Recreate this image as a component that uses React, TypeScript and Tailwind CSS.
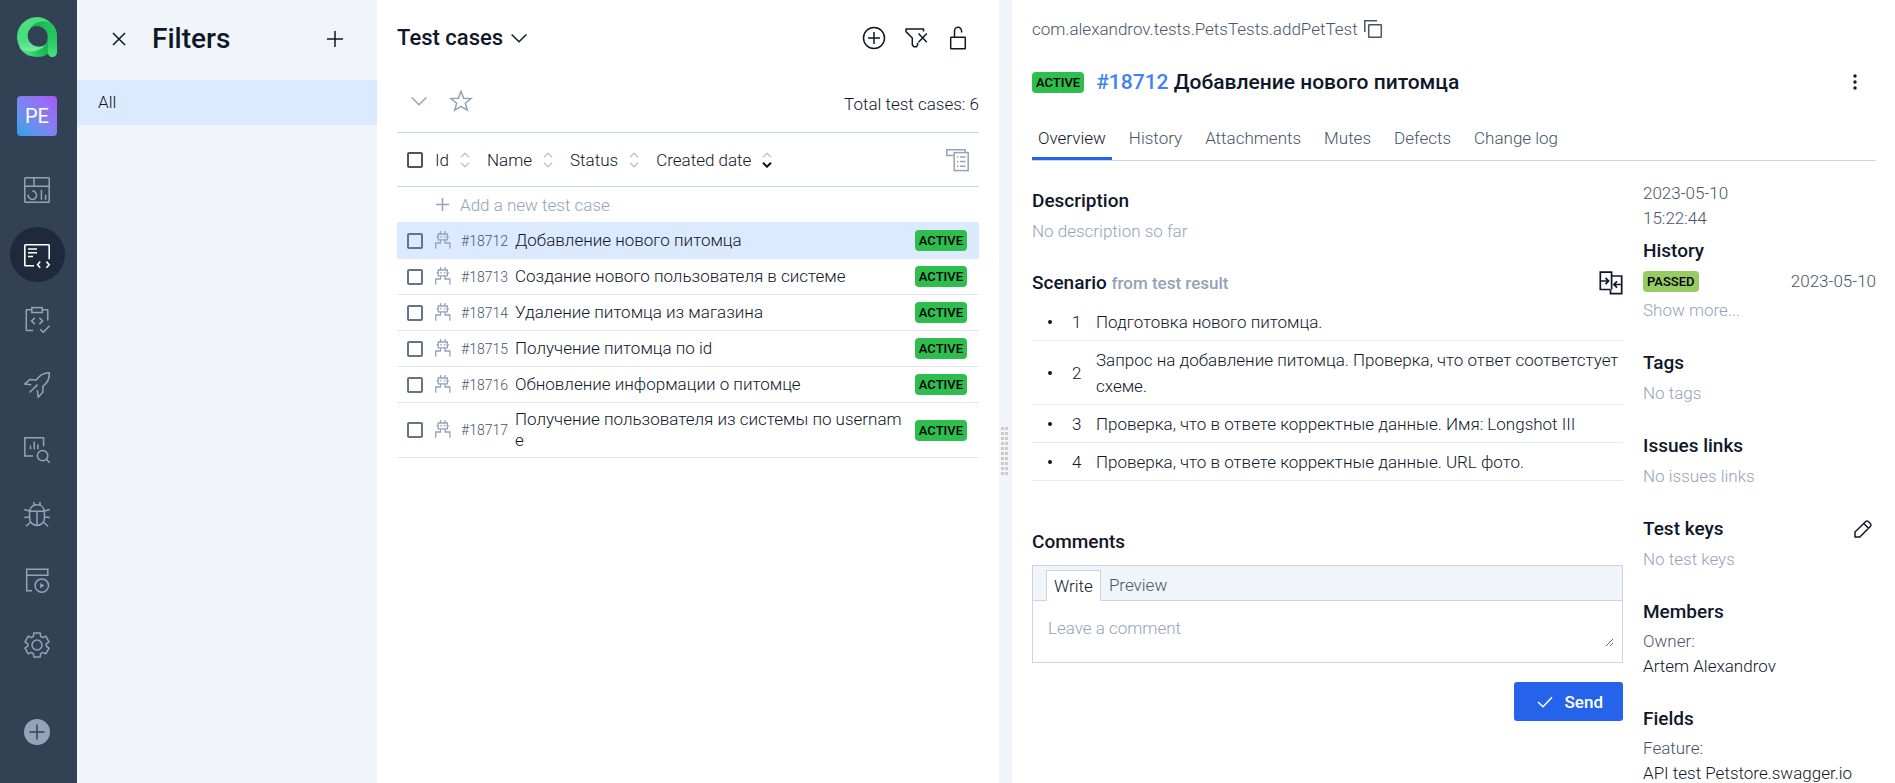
import React, { useState } from "react";

type IconProps = { size: number; className?: string; stroke?: number; children: React.ReactNode };

function Icon({ size, className = "", stroke = 1.5, children }: IconProps) {
  return (
    <svg
      width={size}
      height={size}
      viewBox={`0 0 ${size} ${size}`}
      fill="none"
      stroke="currentColor"
      strokeWidth={stroke}
      aria-hidden="true"
      className={`shrink-0 overflow-visible ${className}`}
    >
      {children}
    </svg>
  );
}

function Logo() {
  return (
    <svg width="40" height="40" viewBox="0 0 40 40" fill="none" aria-hidden="true">
      <defs>
        <linearGradient id="ringLeft" x1="8" y1="4" x2="14" y2="38" gradientUnits="userSpaceOnUse">
          <stop stopColor="#4ade80" />
          <stop offset="0.55" stopColor="#4ade80" />
          <stop offset="1" stopColor="#86efac" />
        </linearGradient>
        <linearGradient id="ringRight" x1="15" y1="8" x2="33" y2="14" gradientUnits="userSpaceOnUse">
          <stop stopColor="#1aad50" />
          <stop offset="1" stopColor="#22c55e" />
        </linearGradient>
        <linearGradient id="ringBottom" x1="10" y1="38" x2="32" y2="30" gradientUnits="userSpaceOnUse">
          <stop stopColor="#4ade80" />
          <stop offset="0.5" stopColor="#22c55e" />
          <stop offset="1" stopColor="#1aad50" />
        </linearGradient>
        <linearGradient id="stem" x1="36" y1="6" x2="36" y2="40" gradientUnits="userSpaceOnUse">
          <stop stopColor="#22c55e" />
          <stop offset="0.4" stopColor="#22c55e" />
          <stop offset="1" stopColor="#4ade80" />
        </linearGradient>
      </defs>
      <path d="M35.500 20A15.500 15.500 0 0 1 20 35.500C14 35.500 9 33 6 28" stroke="url(#ringBottom)" strokeWidth="9" />
      <path d="M20 0A20 20 0 0 0 4 32C9 36 23 36 29.500 26.500A11 11 0 1 1 14 10.700C19 4 29 4 35 7.200A20 20 0 0 0 20 0Z" fill="url(#ringLeft)" />
      <path d="M14 10.700C19 3.500 29 2.500 35 6.800A20 20 0 0 1 40 20V26H30.800V20A11 11 0 0 0 14 10.700Z" fill="url(#ringRight)" />
      <path d="M30.800 20L36 8Q40 13 40 20V35.500A4.600 4.600 0 0 1 30.800 35.500Z" fill="url(#stem)" />
    </svg>
  );
}

function DashboardIcon() {
  return (
    <Icon size={26}>
      <rect x="0.8" y="0.8" width="24.4" height="24.4" rx="0.8" />
      <path d="M0.8 9.200H25.200M10 0.800V9.200M17.400 13V22.800M21.600 17.800V22.800M4.200 17.600A4.200 4.200 0 1 0 8.200 14" />
    </Icon>
  );
}

function TestCasesIcon() {
  return (
    <Icon size={26} stroke={1.6}>
      <path d="M10 23.800H1.500a.7.700 0 0 1-.7-.7V3.500a.7.700 0 0 1 .7-.7H24.500a.7.700 0 0 1 .7.700V17.200" />
      <path d="M4 7H13M4 10.800H13M4 14.500H9M16.200 19.600L13.600 22.700L16.200 25.800M22.400 19.600L25.200 22.700L22.400 25.800" />
    </Icon>
  );
}

function ClipboardCodeIcon() {
  return (
    <Icon size={26}>
      <path d="M7.800 2.800H2.900a.6.600 0 0 0-.6.600V23a.6.600 0 0 0 .6.600H9M18.200 2.800H23.200a.6.600 0 0 1 .6.600V13.600" />
      <rect x="7.800" y="0.600" width="10.400" height="4.900" />
      <path d="M10.800 10.900L7.600 14L10.800 17.100M15.400 10.900L18.600 14L15.400 17.100M16.300 22.400L19.400 25.200L25.600 18.700" />
    </Icon>
  );
}

function RocketIcon() {
  return (
    <Icon size={26}>
      <path
        strokeLinejoin="round"
        d="M7.200 12.700L.7 12L5.700 7.600L12.200 8C14.500 4.500 18.500.8 25.300.7C25.700 6.500 22.500 11.500 19 14.200L18.800 20.300L14.200 25.300L13.300 18.200M13.600 12.600L5.500 20.500"
      />
    </Icon>
  );
}

function AnalyticsIcon() {
  return (
    <Icon size={26}>
      <path d="M9 19H.8V.8H19.600V9.200M6.500 8.500V12.200M10.200 4.500V12.200M13.900 7.300V12.200" />
      <circle cx="18.600" cy="18.600" r="5.200" />
      <path d="M22.300 22.300L25.700 25.700" />
    </Icon>
  );
}

function BugIcon() {
  return (
    <Icon size={26}>
      <path d="M5.600 10.500C5.600 5.500 9 2.800 13 2.800S20.400 5.500 20.400 10.500V16C20.400 20.500 17 23.400 13 23.400S5.600 20.500 5.600 16Z" />
      <path d="M5.600 9.200H20.400M13 9.200V23.400M10 0V3.400M16 0V3.400M.2 7.600L5.700 8.900M25.800 7.600L20.300 8.900M.2 15.600L5.500 15M25.800 15.600L20.500 15M2 24.300L7 19.800M24 24.300L19 19.800" />
    </Icon>
  );
}

function LaunchIcon() {
  return (
    <Icon size={26}>
      <path d="M8 23.700H2.700V2.300H23.800V8.200H2.700" />
      <circle cx="17.800" cy="18.600" r="6.700" />
      <path d="M16.200 15.900L20.400 18.600L16.200 21.300Z" fill="currentColor" stroke="none" />
    </Icon>
  );
}

function gearPath() {
  const ring: [number, number][] = [
    [9.3, -23],
    [12.4, -15],
    [12.4, 15],
    [9.3, 23],
  ];
  const points: string[] = [];
  for (let tooth = 0; tooth < 6; tooth++) {
    for (const [radius, offset] of ring) {
      const angle = ((tooth * 60 + offset) * Math.PI) / 180;
      points.push(`${(13 + radius * Math.sin(angle)).toFixed(2)} ${(13 - radius * Math.cos(angle)).toFixed(2)}`);
    }
  }
  return `M${points.join("L")}Z`;
}

function GearIcon() {
  return (
    <Icon size={26}>
      <path d={gearPath()} strokeLinejoin="round" />
      <circle cx="13" cy="13" r="5" />
    </Icon>
  );
}

function RobotIcon() {
  return (
    <Icon size={16} stroke={1.3} className="text-[#94a3b8]">
      <path d="M5.500-2V1M10-2V1M3.200 1H12.300V6.800H3.200ZM1.400 3.800H3.200M12.300 3.800H14.100M5.500 6.800V10H.7V15.800M10 6.800V10H14.900V15.800" />
      <path d="M6 3V4.600M9.600 3V4.600" />
    </Icon>
  );
}

function ChevronIcon({ className = "" }: { className?: string }) {
  return (
    <Icon size={16} className={className}>
      <path d="M.6 4.500L8 11.700L15.400 4.500" />
    </Icon>
  );
}

function SortIcon({ active = false }: { active?: boolean }) {
  return (
    <svg width="10" height="16" viewBox="0 0 10 16" fill="none" strokeWidth="1.400" aria-hidden="true">
      <path d="M1 5.200L5 1.300L9 5.200" stroke="#c4c4c4" />
      <path
        d="M1 10.800L5 14.700L9 10.800"
        stroke={active ? "#111111" : "#c4c4c4"}
        strokeWidth={active ? 2 : 1.4}
      />
    </svg>
  );
}

const navItems = [
  { label: "Dashboards", icon: <DashboardIcon /> },
  { label: "Test cases", icon: <TestCasesIcon />, active: true },
  { label: "Test plans", icon: <ClipboardCodeIcon /> },
  { label: "Launches", icon: <RocketIcon /> },
  { label: "Analytics", icon: <AnalyticsIcon /> },
  { label: "Defects", icon: <BugIcon /> },
  { label: "Jobs", icon: <LaunchIcon /> },
  { label: "Settings", icon: <GearIcon /> },
];

function Sidebar() {
  return (
    <nav aria-label="Main" className="flex w-[77px] shrink-0 flex-col items-center bg-[#334155] py-[17px] pr-[3px] text-[#94a3b8]">
      <a href="#home" aria-label="Home">
        <Logo />
      </a>
      <a
        href="#project"
        className="mt-[39px] flex size-10 shrink-0 items-center justify-center rounded-[4px] bg-linear-to-tr from-[#0ea5e9] to-[#a855f7] text-[20px] font-normal text-white"
      >
        PE
      </a>
      <ul className="mt-[21px] flex flex-col">
        {navItems.map((item) => (
          <li key={item.label} className="flex h-[65px] items-center justify-center">
            <a
              href={`#${item.label}`}
              aria-label={item.label}
              className={
                item.active
                  ? "flex size-[55px] items-center justify-center rounded-full bg-[#1e293b] text-white"
                  : "flex size-[55px] items-center justify-center"
              }
            >
              {item.icon}
            </a>
          </li>
        ))}
      </ul>
      <button type="button" aria-label="Create" className="mt-[42px]">
        <Icon size={26}>
          <circle cx="13" cy="13" r="13" fill="currentColor" stroke="none" />
          <path d="M13 5.500V20.500M5.500 13H20.500" stroke="#334155" />
        </Icon>
      </button>
    </nav>
  );
}

function FiltersPanel() {
  return (
    <aside className="w-[300px] shrink-0 bg-[#f1f5f9]">
      <header className="flex h-20 items-center pr-[34px] pb-[2px] pl-[35px]">
        <button type="button" aria-label="Close filters">
          <Icon size={14}>
            <path d="M1 1L13 13M13 1L1 13" />
          </Icon>
        </button>
        <h2 className="ml-[26px] grow text-[28px] leading-8 font-medium">Filters</h2>
        <button type="button" aria-label="Add filter">
          <Icon size={16}>
            <path d="M8 0V16M0 8H16" />
          </Icon>
        </button>
      </header>
      <a href="#all" className="flex h-[45px] items-center bg-[#dbeafe] px-[21px] pb-[2px]">
        All
      </a>
    </aside>
  );
}

const testCases = [
  { id: 18712, name: "Добавление нового питомца" },
  { id: 18713, name: "Создание нового пользователя в системе" },
  { id: 18714, name: "Удаление питомца из магазина" },
  { id: 18715, name: "Получение питомца по id" },
  { id: 18716, name: "Обновление информации о питомце" },
  { id: 18717, name: "Получение пользователя из системы по username" },
];

const checkboxClass = "block size-4 shrink-0 appearance-none rounded-[2px] border-2 bg-transparent checked:bg-[#2563eb]";

function StatusBadge({ children, passed = false }: { children: string; passed?: boolean }) {
  return (
    <span
      className={
        passed
          ? "flex h-[21px] shrink-0 items-center rounded-[4px] bg-[#97cc64] px-1 text-[13px] leading-none font-medium text-black"
          : "flex h-[21px] shrink-0 items-center rounded-[4px] bg-[#2dbe4e] px-1 text-[13px] leading-none font-medium text-black"
      }
    >
      {children}
    </span>
  );
}

function TestCasesPanel() {
  const [selected, setSelected] = useState(18712);
  const columns = ["Id", "Name", "Status", "Created date"];
  return (
    <section className="min-w-0 flex-[622_622_622px] px-5">
      <header className="flex h-[76px] items-center pr-[9px]">
        <h1>
          <button type="button" className="flex items-center gap-2 text-[22px] leading-7 font-medium">
            Test cases
            <ChevronIcon />
          </button>
        </h1>
        <div className="ml-auto flex items-center gap-[18px]">
          <button type="button" aria-label="Create test case">
            <Icon size={24}>
              <circle cx="12" cy="12" r="10.500" />
              <path d="M12 6V18M6 12H18" />
            </Icon>
          </button>
          <button type="button" aria-label="Clear filter">
            <Icon size={24}>
              <path strokeLinejoin="round" d="M19.500 5.500V3H2V5.600L8.300 12V18.800L9.800 20.800H12.600L13.600 18.600V16.800" />
              <path d="M14.500 7.600L22.800 16.200M22.800 7.600L14.500 16.200" />
            </Icon>
          </button>
          <button type="button" aria-label="Unlock">
            <Icon size={24}>
              <rect x="4.700" y="11.200" width="14.600" height="11.600" rx="0.500" />
              <path d="M8.500 11V5.500A3.500 4 0 0 1 15.600 5V6.500" />
            </Icon>
          </button>
        </div>
      </header>
      <div className="flex h-[56px] items-center pl-[14px]">
        <div className="flex items-center gap-[22px] pb-[6px] text-[#94a3b8]">
          <button type="button" aria-label="Expand all">
            <ChevronIcon />
          </button>
          <button type="button" aria-label="Favourites">
            <Icon size={24}>
              <path d="M12 2.400L14.700 9.200L22 9.600L16.300 14.200L18.300 21.200L12 17.300L5.700 21.200L7.700 14.200L2 9.600L9.300 9.200Z" />
            </Icon>
          </button>
        </div>
        <p className="ml-auto">Total test cases: 6</p>
      </div>
      <table className="block">
        <thead className="block border-y border-[#cbd5e1]">
          <tr className="flex h-[53px] items-center px-[10px]">
            <th className="mr-3">
              <input type="checkbox" aria-label="Select all" className={`${checkboxClass} border-[#475569]`} />
            </th>
            {columns.map((column) => (
              <th key={column} className="mr-[17px] font-light">
                <button type="button" className="flex items-center gap-[11px]">
                  {column}
                  <SortIcon active={column === "Created date"} />
                </button>
              </th>
            ))}
            <th className="ml-auto">
              <button type="button" aria-label="Configure columns" className="block text-[#94a3b8]">
                <Icon size={23}>
                  <path d="M7.500 7.500H.8V1.800H19.200V4.500" />
                  <rect x="8.200" y="4.600" width="14" height="18" />
                  <path d="M11 9H12.400M14 9H19.500M11 13.600H12.400M14 13.600H19.500M11 18.200H12.400M14 18.200H19.500" />
                </Icon>
              </button>
            </th>
          </tr>
        </thead>
        <tbody className="block">
          <tr className="flex h-[35px] items-center pl-[39px]">
            <td>
              <button type="button" className="flex items-center gap-[11px] text-[#94a3b8]">
                <Icon size={13}>
                  <path d="M6.500 0V13M0 6.500H13" />
                </Icon>
                Add a new test case
              </button>
            </td>
          </tr>
          {testCases.map((test) => (
            <tr
              key={test.id}
              onClick={() => setSelected(test.id)}
              className={
                test.id === selected
                  ? "flex min-h-[37px] items-center border-y border-[#dbeafe] bg-[#dbeafe] pr-3 pl-[10px]"
                  : "flex min-h-9 items-center border-b border-[#e2e8f0] pr-3 pl-[10px]"
              }
            >
              <td className="mr-3">
                <input type="checkbox" aria-label={`Select #${test.id}`} className={`${checkboxClass} border-[#64748b]`} />
              </td>
              <td className="mr-[10px]">
                <RobotIcon />
              </td>
              <td className="mr-2 w-[46px] text-[14px] text-[#475569]">#{test.id}</td>
              <td className="min-w-0 flex-1 py-[6px] pr-[10px] leading-[21px] break-all">{test.name}</td>
              <td>
                <StatusBadge>ACTIVE</StatusBadge>
              </td>
            </tr>
          ))}
        </tbody>
      </table>
    </section>
  );
}

function Splitter() {
  return (
    <div role="separator" aria-orientation="vertical" className="flex w-[13px] shrink-0 items-start justify-center bg-[#f1f5f9] pt-[427px] pr-[2px]">
      <div className="grid grid-cols-2 gap-x-[1px] gap-y-[2px]">
        {Array.from({ length: 20 }, (_, i) => (
          <span key={i} className="h-[3px] w-[3px] bg-[#cbcbcb]" />
        ))}
      </div>
    </div>
  );
}

const tabs = ["Overview", "History", "Attachments", "Mutes", "Defects", "Change log"];

const steps = [
  "Подготовка нового питомца.",
  "Запрос на добавление питомца. Проверка, что ответ соответстует схеме.",
  "Проверка, что в ответе корректные данные. Имя: Longshot III",
  "Проверка, что в ответе корректные данные. URL фото.",
];

const headingClass = "text-[19px] leading-[26px] font-medium";

function Overview() {
  return (
    <div className="min-w-0 flex-1">
      <h3 className={headingClass}>Description</h3>
      <p className="mt-1 text-[#94a3b8]">No description so far</p>

      <div className="mt-[26px] flex items-center justify-between">
        <h3 className={headingClass}>
          Scenario <span className="text-[17px] text-[#94a3b8]">from test result</span>
        </h3>
        <button type="button" aria-label="Compare scenario">
          <Icon size={24} stroke={1.7}>
            <path d="M11 18.500H1.300V1.200H12.600V18.500M12.600 5H22.700V22.600H11.500V18.500M1.300 10H9.500M6.500 6.800L9.600 10L6.500 13.200M22.700 13.500H15M18 10.300L14.900 13.500L18 16.700" />
          </Icon>
        </button>
      </div>
      <ol className="mt-[7px]">
        {steps.map((step, index) => (
          <li key={step} className="flex items-center border-b border-[#e2e8f0] pt-[6px] pb-[5px]">
            <span aria-hidden="true" className="ml-4 size-1 shrink-0 rounded-full bg-[#0f172a]" />
            <span className="w-[44px] shrink-0 pl-5">{index + 1}</span>
            <span className="min-w-0">{step}</span>
          </li>
        ))}
      </ol>

      <h3 className={`${headingClass} mt-[48px]`}>Comments</h3>
      <form onSubmit={(event) => event.preventDefault()} className="mt-[10px]">
        <div className="border border-[#cbd5e1]">
          <div className="flex items-end border-b border-[#cbd5e1] bg-[#f1f5f9] px-[13px] pt-1">
            <button type="button" className="-mb-px h-[31px] border border-b-0 border-[#cbd5e1] bg-white px-[7px]">
              Write
            </button>
            <button type="button" className="h-[30px] px-2 text-[#475569]">
              Preview
            </button>
          </div>
          <div className="p-2 pb-[15px]">
            <textarea
              aria-label="Comment"
              rows={1}
              placeholder="Leave a comment"
              className="block h-[38px] w-full resize-y overflow-hidden px-[7px] py-[6px] leading-[26px] outline-none placeholder:text-[#94a3b8]"
            />
          </div>
        </div>
        <button
          type="submit"
          className="mt-[19px] ml-auto flex h-[39px] items-center gap-3 rounded-[3px] bg-[#2563eb] pr-5 pl-[23px] text-[17px] font-medium text-white"
        >
          <Icon size={16}>
            <path d="M1 8L6 12.800L15 3.300" />
          </Icon>
          Send
        </button>
      </form>
    </div>
  );
}

function Block({ title, action, children }: { title: string; action?: React.ReactNode; children: React.ReactNode }) {
  return (
    <section>
      <div className="flex items-center justify-between">
        <h3 className={headingClass}>{title}</h3>
        {action}
      </div>
      <div className="mt-1">{children}</div>
    </section>
  );
}

function Details() {
  return (
    <aside className="flex w-[233px] shrink-0 flex-col gap-[27px]">
      <div>
        <p className="-mt-[7px] w-[100px] leading-[25px] text-[#475569]">2023-05-10 15:22:44</p>
        <h3 className={`${headingClass} mt-[7px]`}>History</h3>
        <div className="mt-[5px] flex items-center justify-between leading-[24px] text-[#475569]">
          <StatusBadge passed>PASSED</StatusBadge>
          <span>2023-05-10</span>
        </div>
        <a href="#history" className="mt-1 block text-[#94a3b8]">
          Show more...
        </a>
      </div>
      <Block title="Tags">
        <p className="text-[#94a3b8]">No tags</p>
      </Block>
      <Block title="Issues links">
        <p className="text-[#94a3b8]">No issues links</p>
      </Block>
      <Block
        title="Test keys"
        action={
          <button type="button" aria-label="Edit test keys" className="mr-1">
            <Icon size={18}>
              <path strokeLinejoin="round" d="M1 17V12L11.800 1.500Q13 .4 14.300 1.500L16.500 3.700Q17.500 5 16.500 6.200L5.800 17ZM9.800 3.500L14.500 8.200" />
            </Icon>
          </button>
        }
      >
        <p className="text-[#94a3b8]">No test keys</p>
      </Block>
      <Block title="Members">
        <p className="leading-[25px] text-[#475569]">Owner:</p>
        <p className="leading-[25px]">Artem Alexandrov</p>
      </Block>
      <Block title="Fields">
        <p className="leading-[25px] text-[#475569]">Feature:</p>
        <p className="leading-[25px]">API test Petstore.swagger.io</p>
      </Block>
    </aside>
  );
}

function TestCaseDetails() {
  return (
    <main className="min-w-0 flex-[883_883_883px] overflow-hidden pr-[19px] pl-5">
      <div className="flex h-[58px] items-center gap-[6px] text-[#475569]">
        com.alexandrov.tests.PetsTests.addPetTest
        <button type="button" aria-label="Copy name">
          <Icon size={18}>
            <path d="M.8 12V.7H13" />
            <rect x="4.700" y="4.700" width="12.600" height="12.600" rx="0.500" />
          </Icon>
        </button>
      </div>
      <div className="flex h-[48px] items-center pr-[17px]">
        <StatusBadge>ACTIVE</StatusBadge>
        <h2 className="ml-3 text-[21px] leading-7 font-medium">
          <a href="#18712" className="text-[#3b82f6]">
            #18712
          </a>{" "}
          Добавление нового питомца
        </h2>
        <button type="button" aria-label="More actions" className="ml-auto">
          <svg width="8" height="18" viewBox="0 0 8 18" fill="currentColor" aria-hidden="true">
            <circle cx="4" cy="3" r="1.700" />
            <circle cx="4" cy="9" r="1.700" />
            <circle cx="4" cy="15" r="1.700" />
          </svg>
        </button>
      </div>
      <div role="tablist" className="mt-[14px] flex h-[41px] gap-[11px] border-b border-[#cbd5e1] text-[#475569]">
        {tabs.map((tab, index) => (
          <button
            key={tab}
            type="button"
            role="tab"
            aria-selected={index === 0}
            className={
              index === 0
                ? "border-b-[3px] border-[#2563eb] px-[6px] pb-[2px] text-[#0f172a]"
                : "border-b-[3px] border-transparent px-[6px] pb-[2px]"
            }
          >
            {tab}
          </button>
        ))}
      </div>
      <div className="mt-[27px] flex gap-5">
        <Overview />
        <Details />
      </div>
    </main>
  );
}

export default function App() {
  return (
    <div className="flex h-screen overflow-hidden bg-white font-['Roboto',sans-serif] text-[17px] leading-[26px] font-light text-[#0f172a]">
      <Sidebar />
      <FiltersPanel />
      <TestCasesPanel />
      <Splitter />
      <TestCaseDetails />
    </div>
  );
}
